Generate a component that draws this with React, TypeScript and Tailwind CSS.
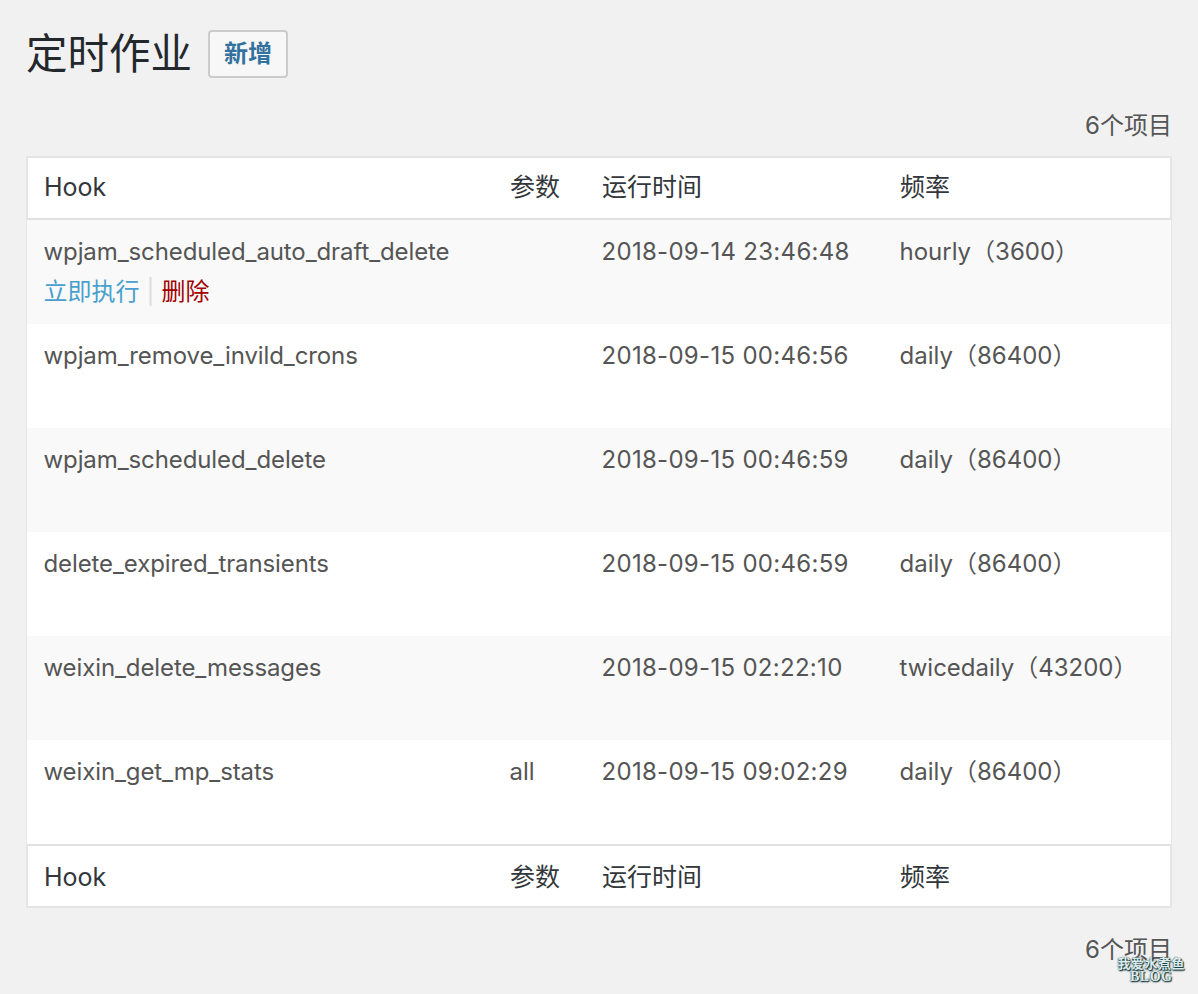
import React from "react";

const rows = [
  ["wpjam_scheduled_auto_draft_delete", "", "2018-09-14 23:46:48", "hourly（3600）"],
  ["wpjam_remove_invild_crons", "", "2018-09-15 00:46:56", "daily（86400）"],
  ["wpjam_scheduled_delete", "", "2018-09-15 00:46:59", "daily（86400）"],
  ["delete_expired_transients", "", "2018-09-15 00:46:59", "daily（86400）"],
  ["weixin_delete_messages", "", "2018-09-15 02:22:10", "twicedaily（43200）"],
  ["weixin_get_mp_stats", "all", "2018-09-15 09:02:29", "daily（86400）"],
];

function HeadRow({ border }: { border: string }) {
  return (
    <div className={`grid grid-cols-[466px_92px_298px_1fr] h-[62px] items-center pl-[16px] text-[25px] text-[#32373c] ${border}`}>
      <span>Hook</span>
      <span>参数</span>
      <span>运行时间</span>
      <span>频率</span>
    </div>
  );
}

export default function App() {
  return (
    <div className="relative h-[994px] overflow-hidden bg-[#f1f1f1] pl-[26px] pr-[26px] font-['Inter','Noto_Sans_CJK_SC',sans-serif] text-[#555]">
      {/* title */}
      <div className="flex items-center pt-[30px] h-[78px]">
        <h1 className="text-[41.5px] leading-[48px] text-[#23282d]">定时作业</h1>
        <button className="ml-[16px] w-[80px] h-[48px] rounded-[4px] border-2 border-[#ccc] bg-[#f7f7f7] text-[24px] font-semibold text-[#33719e]">
          新增
        </button>
      </div>

      <div className="mt-[31px] h-[33px] text-right text-[24px] leading-[34px]">6个项目</div>

      {/* table */}
      <div className="mt-[14px] border-2 border-[#e5e5e5] bg-white">
        <HeadRow border="border-b-2 border-[#e1e1e1]" />
        {rows.map((r, i) => (
          <div
            key={r[0]}
            className={`-mx-[1px] grid grid-cols-[466px_92px_298px_1fr] h-[104px] pl-[16.5px] pt-[16px] text-[24px] leading-[32px] ${i % 2 === 0 ? "bg-[#f9f9f9]" : "bg-white"}`}
          >
            <div>
              <div className="tracking-[-0.1px]">{r[0]}</div>
              {i === 0 && (
                <div className="mt-[8px] flex items-center text-[24px] leading-[32px]">
                  <span className="text-[#4a9fce]">立即执行</span>
                  <span className="mx-[7px] text-[#ddd]">|</span>
                  <span className="text-[#a00000]">删除</span>
                </div>
              )}
            </div>
            <div>{r[1]}</div>
            <div className="tracking-[0.3px]">{r[2]}</div>
            <div>{r[3]}</div>
          </div>
        ))}
        <HeadRow border="border-t-2 border-[#e1e1e1] pt-[4px]" />
      </div>

      <div className="mt-[25px] h-[34px] text-right text-[24px] leading-[34px]">6个项目</div>

      {/* watermark */}
      <div className="absolute right-[13px] bottom-[11px] flex flex-col items-center text-[13px] leading-[13px] font-bold text-[#dfeaea] [text-shadow:0_0_1px_#0b3b3f,1px_1px_1px_#0b3b3f,0_1px_2px_#555]">
        <span className="tracking-[0.5px]">我爱水煮鱼</span>
        <span className="font-['Liberation_Serif',serif] text-[14px] tracking-[0.5px]">BLOG</span>
      </div>
    </div>
  );
}
